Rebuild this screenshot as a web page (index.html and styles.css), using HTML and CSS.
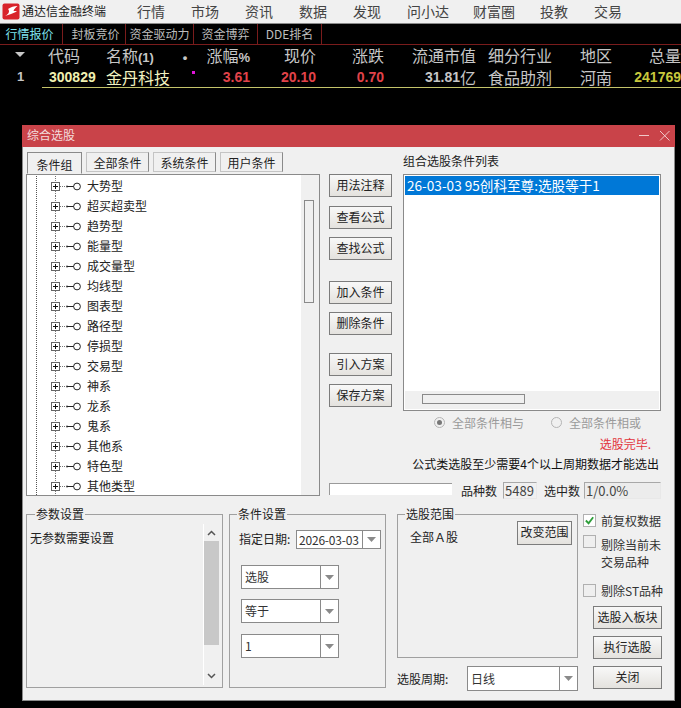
FILE: index.html
```html
<!DOCTYPE html>
<html lang="zh-CN">
<head>
<meta charset="utf-8">
<title>通达信金融终端</title>
<link rel="stylesheet" href="styles.css">
</head>
<body>
<svg class="defs" width="0" height="0">
  <symbol id="node" viewBox="0 0 60 20">
    <path d="M9.5 0V20" stroke="#555" stroke-dasharray="1 1" fill="none"/>
    <path d="M28.5 0V5M28.5 15V20M33 10.5H39" stroke="#777" stroke-dasharray="1 1" fill="none"/>
    <rect x="24.5" y="6.5" width="8" height="8" fill="#fff" stroke="#666"/>
    <path d="M26 10.5H31M28.5 8V13" stroke="#111" fill="none"/>
    <path d="M39.500 10.500H47" stroke="#222" fill="none"/>
    <path d="M40 9.500V11.500" stroke="#222" fill="none"/>
    <circle cx="50" cy="10.500" r="3.400" fill="#fff" stroke="#222"/>
  </symbol>
  <symbol id="caret" viewBox="0 0 9 5">
    <path d="M0 0H9L4.5 5Z" fill="#8a8a8a"/>
  </symbol>
</svg>

<header class="menubar">
  <svg class="logo" width="18" height="17" viewBox="0 0 18 17">
    <rect width="17" height="16" x="0.5" y="0.5" rx="2" fill="#d8232a"/>
    <path d="M3 13C7 11 8 8 6 6C9 4 12 3 15.500 3C13 5 12 6.500 11.500 8C13 8 14 8 15 8.500C11 10 7 12 3 13Z" fill="#fff"/>
  </svg>
  <span class="app-name">通达信金融终端</span>
  <nav class="menu">
    <span class="m1">行情</span><span class="m1">市场</span><span class="m1">资讯</span><span class="m1">数据</span><span class="m1">发现</span><span class="m2">问小达</span><span class="m3">财富圈</span><span class="m1">投教</span><span class="m1">交易</span>
  </nav>
</header>

<div class="tabs">
  <span class="tab t1 active">行情报价</span><span class="tab t2">封板竞价</span><span class="tab t3">资金驱动力</span><span class="tab t4">资金博弈</span><span class="tab t5">DDE排名</span>
</div>

<section class="quote">
  <div class="qrow qhead">
    <span class="sort"></span><span class="c-code">代码</span><span class="c-name">名称<b class="small">(1)</b></span><span class="c-dot"><b class="small">•</b></span><span class="r">涨幅<b class="small">%</b></span><span class="r">现价</span><span class="r">涨跌</span><span class="r">流通市值</span><span class="c-ind">细分行业</span><span class="c-area">地区</span><span class="r">总量</span>
  </div>
  <div class="qrow qdata">
    <span class="idx">1</span><span class="c-code code num">300829</span><span class="c-name pale">金丹科技</span><span class="c-dot"><i class="mark"></i></span><span class="r num red">3.61</span><span class="r num red">20.10</span><span class="r num red">0.70</span><span class="cap"><span class="num grey">31.81</span>亿</span><span class="c-ind">食品助剂</span><span class="c-area">河南</span><span class="r num olive">241769</span>
  </div>
</section>

<main class="dialog">
  <div class="titlebar">
    <span>综合选股</span>
    <svg class="winbtns" width="31" height="11" viewBox="0 0 31 11">
      <path d="M0 5.500H10M21 1L30.500 10.500M30.500 1L21 10.500" stroke="#f0c8c8" fill="none"/>
    </svg>
  </div>
  <div class="body">
    <div class="top">
      <div class="left">
        <div class="ctabs">
          <span class="ctab c1 on">条件组</span><span class="ctab">全部条件</span><span class="ctab">系统条件</span><span class="ctab">用户条件</span>
        </div>
        <div class="tree">
          <ul class="nodes">
            <li><svg class="nd"><use href="#node"/></svg>大势型</li>
            <li><svg class="nd"><use href="#node"/></svg>超买超卖型</li>
            <li><svg class="nd"><use href="#node"/></svg>趋势型</li>
            <li><svg class="nd"><use href="#node"/></svg>能量型</li>
            <li><svg class="nd"><use href="#node"/></svg>成交量型</li>
            <li><svg class="nd"><use href="#node"/></svg>均线型</li>
            <li><svg class="nd"><use href="#node"/></svg>图表型</li>
            <li><svg class="nd"><use href="#node"/></svg>路径型</li>
            <li><svg class="nd"><use href="#node"/></svg>停损型</li>
            <li><svg class="nd"><use href="#node"/></svg>交易型</li>
            <li><svg class="nd"><use href="#node"/></svg>神系</li>
            <li><svg class="nd"><use href="#node"/></svg>龙系</li>
            <li><svg class="nd"><use href="#node"/></svg>鬼系</li>
            <li><svg class="nd"><use href="#node"/></svg>其他系</li>
            <li><svg class="nd"><use href="#node"/></svg>特色型</li>
            <li><svg class="nd"><use href="#node"/></svg>其他类型</li>
          </ul>
          <div class="vbar"><div class="vthumb"></div></div>
        </div>
      </div>
      <div class="right">
        <div class="upper">
          <div class="btncol">
            <button class="btn g1">用法注释</button>
            <button class="btn g1">查看公式</button>
            <button class="btn g2">查找公式</button>
            <button class="btn g3">加入条件</button>
            <button class="btn g2">删除条件</button>
            <button class="btn g4">引入方案</button>
            <button class="btn g2">保存方案</button>
          </div>
          <div class="listcol">
            <div class="listlabel">组合选股条件列表</div>
            <div class="list">
              <div class="sel">26-03-03 95创科至尊:选股等于1</div>
              <div class="hbar"><div class="hthumb"></div></div>
            </div>
          </div>
        </div>
        <div class="radios">
          <span class="radio rd1"><i class="rdot on"></i>全部条件相与</span>
          <span class="radio rd2"><i class="rdot"></i>全部条件相或</span>
        </div>
        <div class="done">选股完毕.</div>
        <div class="note">公式类选股至少需要4个以上周期数据才能选出</div>
        <div class="stats">
          <div class="progress"></div>
          <span class="st1">品种数</span><span class="val v1">5489</span><span class="st2">选中数</span><span class="val v2">1/0.0%</span>
        </div>
      </div>
    </div>

    <div class="bottom">
      <fieldset class="group g-param">
        <legend>参数设置</legend>
        <div class="param-text">无参数需要设置</div>
        <div class="pbar">
          <svg class="arrow" width="9" height="6" viewBox="0 0 9 6"><path d="M1 5L4.500 1.500L8 5" stroke="#555" stroke-width="1.500" fill="none"/></svg>
          <div class="pthumb"></div>
          <svg class="arrow" width="9" height="6" viewBox="0 0 9 6"><path d="M1 1L4.500 4.500L8 1" stroke="#555" stroke-width="1.500" fill="none"/></svg>
        </div>
      </fieldset>
      <fieldset class="group g-cond">
        <legend>条件设置</legend>
        <div class="daterow">
          <span>指定日期:</span>
          <div class="combo date"><span class="cval">2026-03-03</span><span class="cbtn sm"><svg width="9" height="5"><use href="#caret"/></svg></span></div>
        </div>
        <div class="combo sel-c"><span class="cval">选股</span><span class="cbtn"><svg width="9" height="5"><use href="#caret"/></svg></span></div>
        <div class="combo sel-c"><span class="cval">等于</span><span class="cbtn"><svg width="9" height="5"><use href="#caret"/></svg></span></div>
        <div class="combo sel-c"><span class="cval">1</span><span class="cbtn"><svg width="9" height="5"><use href="#caret"/></svg></span></div>
      </fieldset>
      <div class="rangecol">
        <fieldset class="group g-range">
          <legend>选股范围</legend>
          <span class="range-text">全部Ａ股</span>
          <button class="btn rangebtn">改变范围</button>
        </fieldset>
        <div class="period">
          <span>选股周期:</span>
          <div class="combo pc"><span class="cval">日线</span><span class="cbtn sm"><svg width="9" height="5"><use href="#caret"/></svg></span></div>
        </div>
      </div>
      <div class="actions">
        <label class="chk ck1"><span class="box">
          <svg width="12" height="11" viewBox="0 0 12 11"><path d="M2 5.500L5 8.500L10 2" stroke="#2e9e3a" stroke-width="2" fill="none"/></svg>
        </span>前复权数据</label>
        <label class="chk ck2"><span class="box"></span><span class="two">剔除当前未<br>交易品种</span></label>
        <label class="chk ck3"><span class="box"></span>剔除ST品种</label>
        <button class="btn act a1">选股入板块</button>
        <button class="btn act a2">执行选股</button>
        <button class="btn act a2">关闭</button>
      </div>
    </div>
  </div>
</main>
</body>
</html>
```

FILE: styles.css
```css
* { box-sizing: border-box; }
html, body { margin: 0; padding: 0; }
body {
  width: 681px;
  height: 708px;
  overflow: hidden;
  background: #000;
  position: relative;
  font: 12px/16px "Noto Sans CJK SC", "Liberation Sans", sans-serif;
  color: #222;
}
.defs { position: absolute; }

.menubar {
  height: 24px;
  background: #f0f0f0;
  border-bottom: 1px solid #8a8a8a;
  display: flex;
  align-items: center;
  padding: 0 0 1px 2px;
  color: #333;
}
.logo { flex: none; margin-right: 2px; }
.app-name { width: 115px; font-size: 12px; color: #222; }
.menu { display: flex; font-size: 14px; line-height: 20px; color: #444; }
.m1 { width: 54px; }
.m2 { width: 66px; }
.m3 { width: 67px; }

.tabs {
  height: 21px;
  display: flex;
  border-bottom: 1px solid #7a1c1c;
  color: #bdbdbd;
  line-height: 19px;
}
.tab { border-right: 1px solid #7a1c1c; text-align: center; height: 20px; }
.t1 { width: 63px; padding-right: 3px; }
.t2 { width: 63px; padding-left: 3px; }
.t3 { width: 68px; }
.t4 { width: 64px; }
.t5 { width: 64px; }
.active { color: #7fe3ee; }

.quote { color: #c6c6c6; }
.qrow {
  display: grid;
  grid-template-columns: 42px 58px 75px 20px 55px 66px 68px 92px 75px 60px 70px;
  font-size: 16px;
  white-space: nowrap;
}
.qhead { height: 22px; line-height: 21px; }
.qdata { height: 21px; line-height: 20px; border-bottom: 0; position: relative; }
.qdata::after {
  content: "";
  position: absolute;
  left: 42px;
  right: 0;
  bottom: 0;
  height: 1px;
  background: #c4c46a;
}
.sort {
  width: 0; height: 0;
  margin: 7px 0 0 15px;
  border-left: 5px solid transparent;
  border-right: 5px solid transparent;
  border-top: 5px solid #c6c6c6;
}
.idx { padding-left: 17px; font: bold 13px/20px "Liberation Sans", sans-serif; color: #c6c6c6; }
.c-code { padding-left: 6px; }
.c-name { padding-left: 6px; }
.c-dot { text-align: center; position: relative; }
.c-ind { padding-left: 12px; }
.c-area { padding-left: 29px; }
.r { text-align: right; }
.cap { display: flex; justify-content: flex-end; align-items: center; height: 20px; }
.small { font: bold 13px/16px "Liberation Sans", sans-serif; }
.num { font: bold 14px/20px "Liberation Sans", sans-serif; }
.code { color: #f0f0b0; padding-left: 7px; }
.pale { color: #f2f2c0; }
.red { color: #e2434a; }
.grey { color: #c6c6c6; }
.olive { color: #c8c83c; }
.mark { position: absolute; left: 17px; top: 4px; width: 3px; height: 3px; background: #e014d8; }

.dialog {
  position: absolute;
  left: 22px;
  top: 125px;
  width: 653px;
  height: 576px;
  background: #f0f0f0;
  border: 1px solid #8a8a8a;
  border-top: 0;
  display: flex;
  flex-direction: column;
}
.titlebar {
  flex: none;
  height: 22px;
  margin: 0 -1px;
  background: #c94349;
  color: #f3dcdc;
  display: flex;
  justify-content: space-between;
  align-items: center;
  padding: 0 5px 2px 5px;
}
.body { flex: 1; padding: 5px 0 0 3px; }
.top { display: flex; height: 346px; }
.left { width: 294px; }
.ctabs { display: flex; height: 22px; padding-left: 1px; gap: 4px; align-items: flex-start; }
.ctab {
  width: 63px; height: 20px;
  background: #f0f0f0;
  border: 1px solid #8a8a8a;
  border-left-color: #c4c4c4;
  border-top-color: #c4c4c4;
  border-bottom-color: #c4c4c4;
  text-align: center;
  line-height: 20px;
}
.c1 { width: 55px; height: 22px; border-color: #8a8a8a #8a8a8a #f0f0f0 #8a8a8a; line-height: 24px; }
.tree {
  height: 322px;
  border: 1px solid #8a8a8a;
  background: #fff;
  display: flex;
}
.nodes { flex: 1; list-style: none; margin: 0; padding: 1px 0 0 0; }
.nodes li { height: 20px; display: flex; align-items: center; line-height: 20px; color: #222; }
.nd { width: 60px; height: 20px; flex: none; }
.vbar { width: 18px; background: #f0f0f0; padding: 25px 5px 0 3px; }
.vthumb { height: 103px; border: 1px solid #8a8a8a; background: #f0f0f0; }

.right { margin-left: 9px; width: 333px; }
.upper { display: flex; height: 259px; }
.btncol { width: 74px; display: flex; flex-direction: column; padding-top: 22px; }
.btn {
  display: block;
  width: 63px;
  height: 23px;
  padding: 0 0 2px;
  font: 12px/16px "Noto Sans CJK SC", "Liberation Sans", sans-serif;
  color: #222;
  background: linear-gradient(#f8f8f8, #e4e2de);
  border: 1px solid #7c7c7c;
}
.g1 + .g1 { margin-top: 9px; }
.g2 { margin-top: 8px; }
.g3 { margin-top: 21px; }
.g4 { margin-top: 18px; }
.listcol { width: 258px; }
.listlabel { height: 22px; line-height: 16px; padding-top: 1px; }
.list {
  height: 237px;
  border: 1px solid #8a8a8a;
  background: #fff;
  padding: 1px;
  display: flex;
  flex-direction: column;
  justify-content: space-between;
}
.sel {
  height: 19px;
  background: #0078d7;
  color: #fff;
  font-size: 13.600px;
  line-height: 19px;
  padding-left: 2px;
  white-space: nowrap;
}
.hbar { height: 18px; background: #f0f0f0; padding: 3px 0 0 17px; }
.hthumb { width: 103px; height: 10px; border: 1px solid #8a8a8a; background: #f0f0f0; }

.radios { height: 23px; display: flex; color: #9a9a9a; align-items: center; }
.radio { display: flex; align-items: center; }
.rd1 { margin-left: 105px; width: 117px; }
.rdot {
  width: 11px; height: 11px;
  border-radius: 50%;
  background: #f0f0f0;
  border: 1px solid #b4b4b4;
  margin-right: 7px;
  position: relative;
}
.rdot.on::after {
  content: "";
  position: absolute;
  left: 2px; top: 2px;
  width: 5px; height: 5px;
  border-radius: 50%;
  background: #777;
}
.done { height: 20px; line-height: 20px; color: #e2343c; text-align: right; padding-right: 11px; }
.note { height: 20px; line-height: 20px; text-align: right; padding-right: 3px; white-space: nowrap; color: #111; }
.stats { display: flex; align-items: center; height: 17px; margin-top: 8px; }
.progress { width: 123px; height: 12px; background: #fff; border-top: 1px solid #9a9a9a; border-left: 1px solid #9a9a9a; margin-right: 9px; align-self: flex-start; margin-top: 1px; }
.val { height: 17px; border: 1px solid #a8a8a8; border-right-color: #e8e8e8; border-bottom-color: #e8e8e8; line-height: 15px; padding-left: 1px; font-size: 13px; background: #f0f0f0; color: #444; }
.st1 { width: 42px; }
.v1 { width: 34px; margin-right: 7px; }
.st2 { width: 40px; }
.v2 { width: 77px; background: #ececec; }

.bottom { display: flex; padding-top: 16px; align-items: flex-start; }
.group {
  margin: 0;
  padding: 0;
  border: 1px solid #a0a0a0;
  min-width: 0;
}
.group legend { padding: 0 1px; line-height: 14px; height: 14px; color: #222; }
.g-param {
  width: 197px;
  height: 181px;
  margin-top: -7px;
  position: relative;
}
.g-param legend { margin-left: 8px; }
.param-text { padding: 9px 0 0 3px; }
.pbar {
  position: absolute;
  right: 3px; top: 3px;
  width: 16px; height: 161px;
  border-left: 1px solid #fff;
  display: flex; flex-direction: column; align-items: center;
}
.arrow { flex: none; margin: 6px 0 5px; }
.pthumb { width: 15px; height: 104px; background: #c8c8c8; margin-bottom: 22px; }

.g-cond { width: 157px; height: 181px; margin: -7px 0 0 6px; padding: 8px 0 0 9px; }
.g-cond legend { margin-left: -2px; }
.daterow { display: flex; align-items: center; height: 20px; margin-bottom: 16px; }
.daterow > span { width: 57px; white-space: nowrap; }
.combo {
  display: flex;
  background: #fff;
  border: 1px solid #8a8a8a;
  align-items: stretch;
  color: #333;
}
.cval { flex: 1; padding-left: 3px; white-space: nowrap; }
.cbtn { width: 18px; flex: none; border-left: 1px solid #8a8a8a; display: flex; align-items: center; justify-content: center; }
.date { width: 85px; height: 19px; line-height: 17px; }
.date .cval { padding-left: 2px; letter-spacing: -0.2px; }
.sel-c { width: 98px; height: 24px; margin: 0 0 10px 2px; line-height: 22px; }
.sel-c:last-child { margin-top: 11px; }

.rangecol { width: 181px; margin: -7px 0 0 11px; }
.g-range { height: 151px; position: relative; }
.g-range legend { margin-left: 7px; }
.range-text { position: absolute; left: 12px; top: 8px; }
.rangebtn { position: absolute; left: 119px; top: 0; width: 55px; height: 24px; }
.period { display: flex; align-items: center; margin-top: 8px; }
.period > span { width: 70px; white-space: nowrap; }
.pc { width: 111px; height: 25px; line-height: 23px; }

.actions { width: 85px; margin: 0 0 0 5px; }
.chk { display: flex; align-items: flex-start; white-space: nowrap; color: #333; }
.box {
  width: 13px; height: 13px;
  flex: none;
  border: 1px solid #b0b0b0;
  background: #efefef;
  margin-right: 5px;
  display: flex; align-items: center; justify-content: center;
}
.ck1 { height: 21px; line-height: 14px; }
.ck1 .box { background: #fff; }
.ck2 { height: 49px; line-height: 17px; }
.two { padding-top: 1px; }
.ck3 { height: 22px; line-height: 13px; }
.act { width: 69px; height: 23px; margin-left: 10px; }
.a2 { margin-top: 7px; }
```
